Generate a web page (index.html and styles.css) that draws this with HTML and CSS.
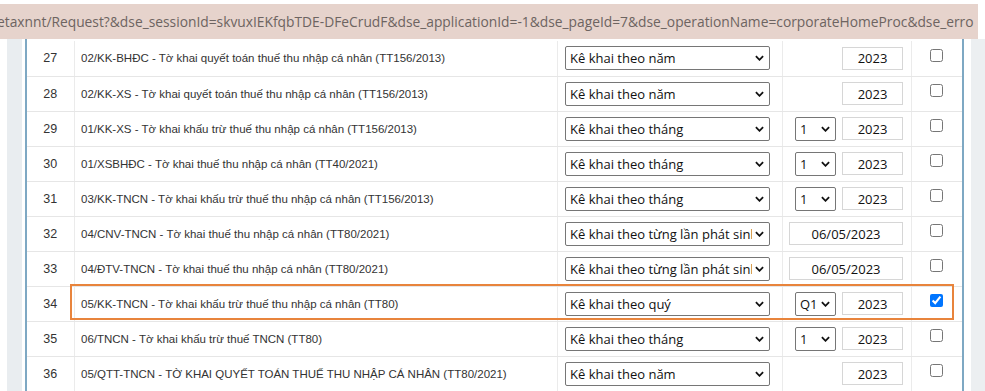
FILE: index.html
```html
<!DOCTYPE html>
<html>
<head>
	<meta charset="utf-8">
	<title>Kê khai thuế</title>
	<link rel="stylesheet" href="styles.css">
</head>
<body>
	<div class="urlbar"><span>etaxnnt/Request?&amp;dse_sessionId=skvuxIEKfqbTDE-DFeCrudF&amp;dse_applicationId=-1&amp;dse_pageId=7&amp;dse_operationName=corporateHomeProc&amp;dse_erro</span></div>
	<div class="page">
		<div class="gutter"></div>
		<div class="panel">
			<table class="forms">
				<colgroup>
					<col class="c-no"><col class="c-name"><col class="c-type"><col class="c-period"><col class="c-pick">
				</colgroup>
				<tr>
					<td class="no">27</td>
					<td class="name">02/KK-BHĐC - Tờ khai quyết toán thuế thu nhập cá nhân (TT156/2013)</td>
					<td class="type"><div class="pick wide"><select><option>Kê khai theo năm</option></select><svg viewBox="0 0 10 6"><path d="M1 1l4 4 4-4"/></svg></div></td>
					<td class="period"><input class="year" value="2023"></td>
					<td class="chk"><input type="checkbox"></td>
				</tr>
				<tr>
					<td class="no">28</td>
					<td class="name">02/KK-XS - Tờ khai quyết toán thuế thu nhập cá nhân (TT156/2013)</td>
					<td class="type"><div class="pick wide"><select><option>Kê khai theo năm</option></select><svg viewBox="0 0 10 6"><path d="M1 1l4 4 4-4"/></svg></div></td>
					<td class="period"><input class="year" value="2023"></td>
					<td class="chk"><input type="checkbox"></td>
				</tr>
				<tr>
					<td class="no">29</td>
					<td class="name">01/KK-XS - Tờ khai khấu trừ thuế thu nhập cá nhân (TT156/2013)</td>
					<td class="type"><div class="pick wide"><select><option>Kê khai theo tháng</option></select><svg viewBox="0 0 10 6"><path d="M1 1l4 4 4-4"/></svg></div></td>
					<td class="period"><div class="pick small"><select><option>1</option></select><svg viewBox="0 0 10 6"><path d="M1 1l4 4 4-4"/></svg></div><input class="year" value="2023"></td>
					<td class="chk"><input type="checkbox"></td>
				</tr>
				<tr>
					<td class="no">30</td>
					<td class="name">01/XSBHĐC - Tờ khai thuế thu nhập cá nhân (TT40/2021)</td>
					<td class="type"><div class="pick wide"><select><option>Kê khai theo tháng</option></select><svg viewBox="0 0 10 6"><path d="M1 1l4 4 4-4"/></svg></div></td>
					<td class="period"><div class="pick small"><select><option>1</option></select><svg viewBox="0 0 10 6"><path d="M1 1l4 4 4-4"/></svg></div><input class="year" value="2023"></td>
					<td class="chk"><input type="checkbox"></td>
				</tr>
				<tr>
					<td class="no">31</td>
					<td class="name">03/KK-TNCN - Tờ khai khấu trừ thuế thu nhập cá nhân (TT156/2013)</td>
					<td class="type"><div class="pick wide"><select><option>Kê khai theo tháng</option></select><svg viewBox="0 0 10 6"><path d="M1 1l4 4 4-4"/></svg></div></td>
					<td class="period"><div class="pick small"><select><option>1</option></select><svg viewBox="0 0 10 6"><path d="M1 1l4 4 4-4"/></svg></div><input class="year" value="2023"></td>
					<td class="chk"><input type="checkbox"></td>
				</tr>
				<tr>
					<td class="no">32</td>
					<td class="name">04/CNV-TNCN - Tờ khai thuế thu nhập cá nhân (TT80/2021)</td>
					<td class="type"><div class="pick wide"><select><option>Kê khai theo từng lần phát sinh</option></select><svg viewBox="0 0 10 6"><path d="M1 1l4 4 4-4"/></svg></div></td>
					<td class="period"><input class="date" value="06/05/2023"></td>
					<td class="chk"><input type="checkbox"></td>
				</tr>
				<tr>
					<td class="no">33</td>
					<td class="name">04/ĐTV-TNCN - Tờ khai thuế thu nhập cá nhân (TT80/2021)</td>
					<td class="type"><div class="pick wide"><select><option>Kê khai theo từng lần phát sinh</option></select><svg viewBox="0 0 10 6"><path d="M1 1l4 4 4-4"/></svg></div></td>
					<td class="period"><input class="date" value="06/05/2023"></td>
					<td class="chk"><input type="checkbox"></td>
				</tr>
				<tr>
					<td class="no">34</td>
					<td class="name">05/KK-TNCN - Tờ khai khấu trừ thuế thu nhập cá nhân (TT80)</td>
					<td class="type"><div class="pick wide"><select><option>Kê khai theo quý</option></select><svg viewBox="0 0 10 6"><path d="M1 1l4 4 4-4"/></svg></div></td>
					<td class="period"><div class="pick small"><select><option>Q1</option></select><svg viewBox="0 0 10 6"><path d="M1 1l4 4 4-4"/></svg></div><input class="year" value="2023"></td>
					<td class="chk"><input type="checkbox" checked></td>
				</tr>
				<tr>
					<td class="no">35</td>
					<td class="name">06/TNCN - Tờ khai khấu trừ thuế TNCN (TT80)</td>
					<td class="type"><div class="pick wide"><select><option>Kê khai theo tháng</option></select><svg viewBox="0 0 10 6"><path d="M1 1l4 4 4-4"/></svg></div></td>
					<td class="period"><div class="pick small"><select><option>1</option></select><svg viewBox="0 0 10 6"><path d="M1 1l4 4 4-4"/></svg></div><input class="year" value="2023"></td>
					<td class="chk"><input type="checkbox"></td>
				</tr>
				<tr>
					<td class="no">36</td>
					<td class="name">05/QTT-TNCN - TỜ KHAI QUYẾT TOÁN THUẾ THU NHẬP CÁ NHÂN (TT80/2021)</td>
					<td class="type"><div class="pick wide"><select><option>Kê khai theo năm</option></select><svg viewBox="0 0 10 6"><path d="M1 1l4 4 4-4"/></svg></div></td>
					<td class="period"><input class="year" value="2023"></td>
					<td class="chk"><input type="checkbox"></td>
				</tr>
			</table>
			<!-- khung đánh dấu dòng đã chọn -->
			<div class="mark"></div>
		</div>
		<div class="side"></div>
	</div>
</body>
</html>
```

FILE: styles.css
```css
* {
	box-sizing: border-box;
}

html, body {
	margin: 0;
	height: 391px;
	overflow: hidden;
	background: #fff;
}

.urlbar {
	margin-top: 4px;
	width: 978px;
	height: 35px;
	background: #e6d3cc;
	color: #6d6461;
	font: 13.8px "Open Sans", sans-serif;
	line-height: 35px;
	white-space: nowrap;
	overflow: hidden;
}

.urlbar span {
	display: block;
	margin-left: -3px;
}

.page {
	display: flex;
	height: 352px;
}

.gutter {
	width: 15px;
	margin: 0 3px 0 7px;
	background: #e9edf0;
}

.panel {
	position: relative;
	width: 939px;
	padding-top: 2px;
	border-left: 2px solid #7ea8c3;
	border-right: 2px solid #7ea8c3;
}

.side {
	width: 15px;
	margin-left: 7px;
	background: #eceff1;
}

.forms {
	width: 935px;
	table-layout: fixed;
	border-collapse: collapse;
	font: 11.5px "Liberation Sans", Arial, sans-serif;
	color: #333;
}

.c-no { width: 48px; }
.c-name { width: 483px; }
.c-type { width: 225px; }
.c-period { width: 129px; }
.c-pick { width: 50px; }

.forms td {
	height: 35px;
	padding: 0;
	border-bottom: 1px solid #e6e6e6;
	border-left: 1px solid #ebebeb;
	vertical-align: middle;
	white-space: nowrap;
}

.forms td.no {
	border-left: none;
	text-align: center;
	font-size: 12.5px;
}

.forms td.name {
	padding-left: 6px;
}

.forms td.type {
	padding-left: 7px;
}

.forms td.period {
	text-align: right;
	padding-right: 8px;
	font-size: 0;
}

.forms td.chk {
	text-align: center;
}

.chk input {
	width: 13px;
	height: 13px;
	margin: 0 0 6px;
	vertical-align: middle;
}

.pick {
	position: relative;
	display: inline-block;
	vertical-align: middle;
}

.pick select {
	appearance: none;
	-webkit-appearance: none;
	display: block;
	height: 24px;
	margin: 0;
	padding: 0 17px 0 4px;
	border: 1px solid #767676;
	border-radius: 2px;
	background: #fff;
	color: #111;
	font: 13px "Open Sans", sans-serif;
}

.pick svg {
	position: absolute;
	top: 9px;
	right: 6px;
	width: 9px;
	height: 6px;
	fill: none;
	stroke: #111;
	stroke-width: 2;
	pointer-events: none;
}

.pick.wide select {
	width: 205px;
}

.pick.small {
	margin-right: 6px;
}

.pick.small select {
	width: 41px;
}

.period input {
	height: 23px;
	margin: 0;
	padding: 0;
	border: 1px solid #d6d6d6;
	color: #111;
	font: 13px "Open Sans", sans-serif;
	text-align: center;
	vertical-align: middle;
}

.period input.year {
	width: 61px;
}

.period input.date {
	width: 114px;
}

.mark {
	position: absolute;
	left: 43px;
	top: 245px;
	width: 884px;
	height: 36px;
	border: 2.5px solid #e8843c;
	pointer-events: none;
}
```
